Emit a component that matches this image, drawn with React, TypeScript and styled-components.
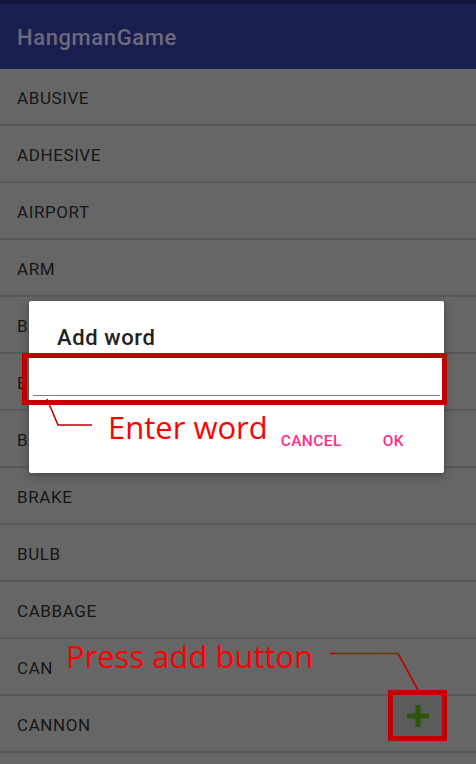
import React from "react";
import styled, { createGlobalStyle } from "styled-components";

const Global = createGlobalStyle`
  html, body { margin: 0; padding: 0; background: #666666; }
  * { box-sizing: border-box; }
`;

const Screen = styled.div`
  position: relative;
  width: 476px;
  height: 764px;
  overflow: hidden;
  background: #666666;
  font-family: Roboto, "Liberation Sans", sans-serif;
`;

const StatusBar = styled.div`
  height: 4px;
  background: #13163a;
`;

const AppBar = styled.div`
  height: 65px;
  background: #1a1e4e;
  display: flex;
  align-items: center;
  padding-left: 17px;
  padding-top: 2px;
`;

const Title = styled.div`
  font-size: 22px;
  font-weight: 500;
  color: #6a6b7e;
  letter-spacing: 0.6px;
`;

const List = styled.div`
  display: flex;
  flex-direction: column;
`;

const Row = styled.div`
  height: 57px;
  display: flex;
  align-items: center;
  padding-left: 17px;
  padding-top: 3px;
  border-bottom: 2px solid #595959;
  font-size: 17px;
  letter-spacing: 0.6px;
  color: #161616;
`;

const Fab = styled.div`
  position: absolute;
  left: 393px;
  top: 695px;
  width: 50px;
  height: 42px;
  background: #5b5b5b;
  display: flex;
  align-items: center;
  justify-content: center;
`;

const Dialog = styled.div`
  position: absolute;
  left: 29px;
  top: 301px;
  width: 415px;
  height: 172px;
  background: #ffffff;
  border-radius: 2px;
  box-shadow: 0 2px 8px rgba(0, 0, 0, 0.35);
  display: flex;
  flex-direction: column;
  padding-top: 22px;
`;

const DialogTitle = styled.div`
  margin-left: 28px;
  font-size: 22px;
  font-weight: 500;
  line-height: 30px;
  letter-spacing: 0.6px;
  color: #212121;
`;

const Field = styled.div`
  margin: 0 4px;
  height: 43px;
  border-bottom: 1px solid #7a7a7a;
`;

const Actions = styled.div`
  display: flex;
  justify-content: flex-end;
  gap: 41px;
  padding-right: 40px;
  margin-top: 36px;
`;

const Action = styled.div`
  font-size: 15.5px;
  font-weight: 500;
  color: #ff2d84;
  letter-spacing: 0.4px;
`;

const RedBox = styled.div<{ $l: number; $t: number; $w: number; $h: number }>`
  position: absolute;
  left: ${(p) => p.$l}px;
  top: ${(p) => p.$t}px;
  width: ${(p) => p.$w}px;
  height: ${(p) => p.$h}px;
  border: 5px solid #c00000;
`;

const Label = styled.div<{ $l: number; $t: number }>`
  position: absolute;
  left: ${(p) => p.$l}px;
  top: ${(p) => p.$t}px;
  font-family: "Open Sans", "Noto Sans", sans-serif;
  font-size: 31px;
  line-height: 36px;
  color: #ff0000;
  white-space: nowrap;
`;

const Lines = styled.svg`
  position: absolute;
  left: 0;
  top: 0;
  pointer-events: none;
`;

const words = [
  "ABUSIVE",
  "ADHESIVE",
  "AIRPORT",
  "ARM",
  "BALLOON",
  "BATTERY",
  "BOTTLE",
  "BRAKE",
  "BULB",
  "CABBAGE",
  "CAN",
  "CANNON",
];

export default function App() {
  return (
    <Screen>
      <Global />
      <StatusBar />
      <AppBar>
        <Title>HangmanGame</Title>
      </AppBar>
      <List>
        {words.map((w) => (
          <Row key={w}>{w}</Row>
        ))}
      </List>
      <Fab>
        <svg width="22" height="22" viewBox="0 0 22 22">
          <rect x="8.5" y="0" width="5" height="22" fill="#2b540c" />
          <rect x="0" y="8.5" width="22" height="5" fill="#2b540c" />
        </svg>
      </Fab>
      <Dialog>
        <DialogTitle>Add word</DialogTitle>
        <Field />
        <Actions>
          <Action>CANCEL</Action>
          <Action>OK</Action>
        </Actions>
      </Dialog>
      <RedBox $l={22} $t={353} $w={425} $h={52} />
      <RedBox $l={388} $t={690} $w={59} $h={51} />
      <Lines width="476" height="764" viewBox="0 0 476 764">
        <polyline
          points="47,399 58,425 92,425"
          fill="none"
          stroke="#c00000"
          strokeWidth="1.6"
        />
        <polyline
          points="330,653.5 398,653.5 418,690"
          fill="none"
          stroke="#c00000"
          strokeWidth="1.6"
        />
      </Lines>
      <Label $l={108} $t={409}>Enter word</Label>
      <Label $l={66} $t={638}>Press add button</Label>
    </Screen>
  );
}
